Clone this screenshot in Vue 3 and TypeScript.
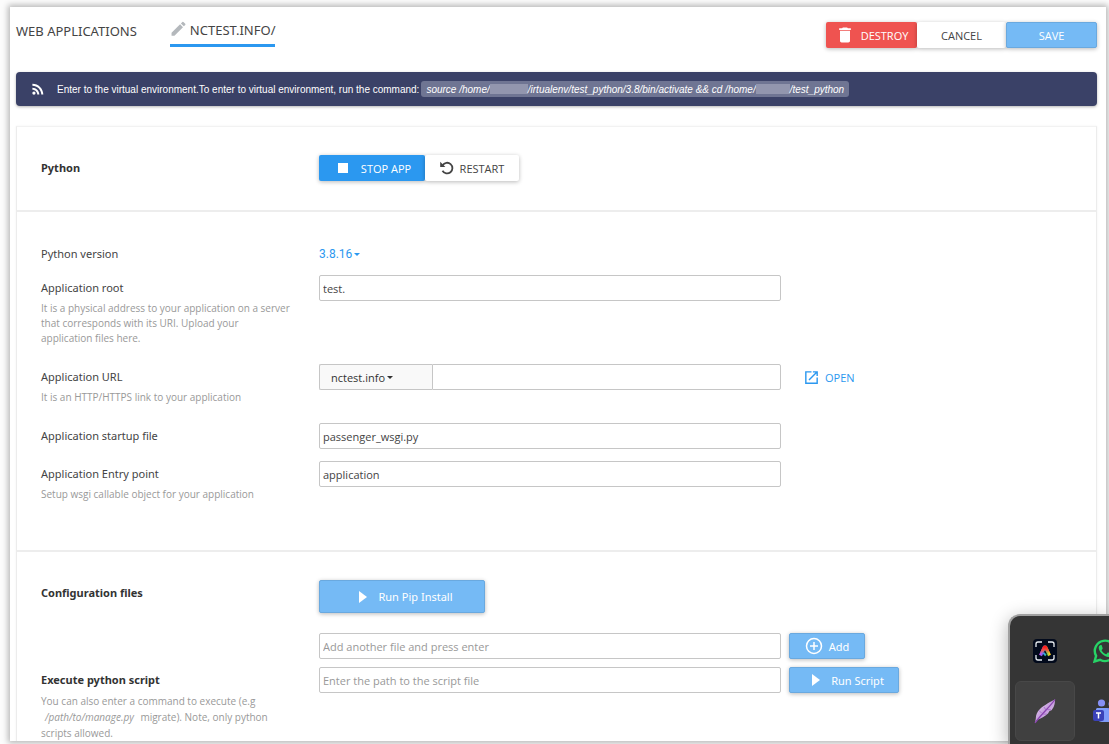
<script setup lang="ts">
import { ref } from 'vue'

const pythonVersion = ref('3.8.16')
const appRoot = ref('test.')
const domain = ref('nctest.info')
const appPath = ref('')
const startupFile = ref('passenger_wsgi.py')
const entryPoint = ref('application')
const extraFile = ref('')
const scriptPath = ref('')
</script>

<template>
  <div class="page">
    <main class="window">
      <header class="top">
        <nav class="tabs">
          <a class="tab" href="#">WEB APPLICATIONS</a>
          <a class="tab active" href="#">
            <svg width="17" height="17" viewBox="1 2 22 22" fill="#b4b8bc"><path d="M3 17.25V21h3.75L17.81 9.94l-3.75-3.75L3 17.25zM20.71 7.04a1 1 0 0 0 0-1.41l-2.34-2.34a1 1 0 0 0-1.41 0l-1.83 1.83 3.75 3.75 1.83-1.83z" /></svg>
            <span>NCTEST.INFO/</span>
          </a>
        </nav>
        <div class="group">
          <button class="btn red" type="button">
            <svg width="20" height="20" viewBox="0 0 24 24" fill="#fff"><path d="M6 19c0 1.1.9 2 2 2h8c1.1 0 2-.9 2-2V7H6v12zM19 4h-3.500l-1-1h-5l-1 1H5v2h14V4z" /></svg>
            <span>DESTROY</span>
          </button>
          <button class="btn white cancel" type="button">CANCEL</button>
          <button class="btn light save" type="button">SAVE</button>
        </div>
      </header>

      <div class="banner">
        <svg width="14" height="14" viewBox="2 2 20 20" fill="#fff"><circle cx="6.2" cy="17.800" r="2.300" /><path d="M4 4.400v2.900c7 0 12.700 5.700 12.700 12.700h2.900C19.600 11.400 12.600 4.400 4 4.400zm0 5.700V13c3.900 0 7 3.100 7 7h2.900c0-5.500-4.400-9.900-9.900-9.900z" /></svg>
        <span>Enter to the virtual environment.To enter to virtual environment, run the command:</span>
        <code>source /home/<i class="mask wide"></i>/irtualenv/test_python/3.8/bin/activate &amp;&amp; cd /home/<i class="mask"></i>/test_python</code>
      </div>

      <form class="card" @submit.prevent>
        <section class="section state">
          <div class="row">
            <h2>Python</h2>
            <div class="group">
              <button class="btn blue" type="button">
                <svg width="20" height="20" viewBox="0 0 24 24" fill="#fff"><path d="M6 6h12v12H6z" /></svg>
                <span>STOP APP</span>
              </button>
              <button class="btn white restart" type="button">
                <svg width="14" height="14" viewBox="0 0 14 14" fill="none" stroke="#444" stroke-width="1.800"><path d="M2.600 4.300A5.300 5.300 0 1 1 2.500 9.700" /><path d="M.2.700v5.200h5.200z" fill="#444" stroke="none" /></svg>
                <span>RESTART</span>
              </button>
            </div>
          </div>
        </section>

        <section class="section settings">
          <div class="row">
            <label for="version">Python version</label>
            <div class="dropdown link">
              <select id="version" v-model="pythonVersion"><option>3.8.16</option></select>
            </div>
          </div>
          <div class="row gap-s">
            <div>
              <label for="root">Application root</label>
              <p>It is a physical address to your application on a server<br />that corresponds with its URI. Upload your<br />application files here.</p>
            </div>
            <input id="root" v-model="appRoot" type="text" />
          </div>
          <div class="row gap-l">
            <div>
              <label for="url">Application URL</label>
              <p>It is an HTTP/HTTPS link to your application</p>
            </div>
            <div class="url">
              <div class="dropdown addon">
                <select v-model="domain" aria-label="Domain"><option>nctest.info</option></select>
              </div>
              <input id="url" v-model="appPath" type="text" />
            </div>
            <a class="open" href="#">
              <svg width="17" height="17" viewBox="0 0 24 24" fill="#2b98f0"><path d="M19 19H5V5h7V3H3v18h18v-9h-2v7zM14 3v2h3.590l-9.830 9.830 1.410 1.410L19 6.410V10h2V3h-7z" /></svg>
              <span>OPEN</span>
            </a>
          </div>
          <div class="row gap-l">
            <label for="startup">Application startup file</label>
            <input id="startup" v-model="startupFile" type="text" />
          </div>
          <div class="row gap-m">
            <div>
              <label for="entry">Application Entry point</label>
              <p>Setup wsgi callable object for your application</p>
            </div>
            <input id="entry" v-model="entryPoint" type="text" />
          </div>
        </section>

        <section class="section files">
          <div class="row">
            <h2>Configuration files</h2>
            <div>
              <button class="btn light pip" type="button">
                <svg width="8" height="12" viewBox="0 0 8 12" fill="#fff"><path d="M0 0l8 6-8 6z" /></svg>
                <span>Run Pip Install</span>
              </button>
            </div>
          </div>
          <div class="row gap-xl">
            <span></span>
            <input v-model="extraFile" type="text" aria-label="Configuration file" placeholder="Add another file and press enter" />
            <button class="btn light add" type="button">
              <svg width="18" height="18" viewBox="0 0 18 18" fill="none" stroke="#fff" stroke-width="1.500"><circle cx="9" cy="9" r="7.500" /><path d="M9 5v8M5 9h8" /></svg>
              <span>Add</span>
            </button>
          </div>
          <div class="row gap-s">
            <div>
              <label class="strong" for="script">Execute python script</label>
              <p class="loose">You can also enter a command to execute (e.g<br /><em>/path/to/manage.py</em> migrate). Note, only python<br />scripts allowed.</p>
            </div>
            <input id="script" v-model="scriptPath" type="text" placeholder="Enter the path to the script file" />
            <button class="btn light run" type="button">
              <svg width="8" height="12" viewBox="0 0 8 12" fill="#fff"><path d="M0 0l8 6-8 6z" /></svg>
              <span>Run Script</span>
            </button>
          </div>
        </section>
      </form>
    </main>

    <aside class="tray">
      <div class="cell">
        <svg width="24" height="24" viewBox="0 0 24 24">
          <defs>
            <linearGradient id="rainbow" x1="0" y1="1" x2="1" y2="1">
              <stop offset="0" stop-color="#c04cf0" /><stop offset=".4" stop-color="#3a8dff" /><stop offset=".6" stop-color="#2fd07a" /><stop offset="1" stop-color="#ffd21f" />
            </linearGradient>
            <linearGradient id="flame" x1="0" y1="0" x2="0" y2="1">
              <stop offset="0" stop-color="#ff1a1a" /><stop offset=".4" stop-color="#ff4a3a" stop-opacity=".85" /><stop offset=".8" stop-color="#ff7a20" stop-opacity="0" />
            </linearGradient>
          </defs>
          <rect width="24" height="24" rx="4" fill="#020a1c" />
          <path d="M3 8V5a2 2 0 0 1 2-2h4M15 3h4a2 2 0 0 1 2 2v3M21 16v3a2 2 0 0 1-2 2h-4M9 21H5a2 2 0 0 1-2-2v-3" fill="none" stroke="#e8edf2" stroke-width="1.300" />
          <path d="M7.500 16.500L11.500 8h1l4 8.500M11 16l1.500-1.500" fill="none" stroke="url(#rainbow)" stroke-width="3.200" stroke-linejoin="round" />
          <path d="M7.500 16.500L11.500 8h1l4 8.500" fill="none" stroke="url(#flame)" stroke-width="3.200" stroke-linejoin="round" />
        </svg>
      </div>
      <div class="cell">
        <svg width="24" height="24" viewBox="0 0 24 24">
          <path d="M1.500 22.500l1.600-5.700a10.200 10.200 0 1 1 4 4z" fill="none" stroke="#27d366" stroke-width="2.400" />
          <path d="M8.800 6.600c-.3-.7-.6-.6-1-.6-.8 0-2.100.9-2.100 2.800 0 2.200 1.600 4.200 2.300 5 1.900 2.200 4.300 4 7 4.300 1.800 0 3.200-1.200 3.200-2.900 0-.4-.3-.5-2.700-1.700-.5-.2-.7-.1-1 .3l-.9 1.200c-.3.300-.6.200-1 0-1.500-.7-2.900-1.700-3.900-3.500-.2-.4 0-.6.200-.8.600-.7 1-1.200.7-1.800z" fill="#27d366" />
        </svg>
      </div>
      <div class="cell selected">
        <svg width="24" height="26" viewBox="0 0 24 26">
          <defs>
            <linearGradient id="plume" x1="0" y1="0" x2="1" y2="1">
              <stop offset="0" stop-color="#f0e2f7" /><stop offset=".5" stop-color="#c49bdc" /><stop offset="1" stop-color="#ecd8f5" />
            </linearGradient>
          </defs>
          <path d="M22 1.500c-4 2-11 5.500-15.500 10C4 14 2.800 17 2.800 20.500L2 25l2-3c4-1.500 8-3.500 11-6.500l1.500-2.500 2-.8c2-2.200 3.500-5.200 3.500-10.700z" fill="url(#plume)" />
          <path d="M22 1.500C16 10 9 15 2 25" fill="none" stroke="#8a44b0" stroke-width="1.300" />
          <path d="M6 12.500L8.500 15M11 9l2 3M10 16l4 .2M14 11.500l4 .3" stroke="#9a5cc0" stroke-width=".7" />
        </svg>
      </div>
      <div class="cell">
        <svg width="24" height="24" viewBox="0 0 24 24">
          <circle cx="8.500" cy="4" r="3.600" fill="#8790f5" />
          <circle cx="18.500" cy="5" r="3" fill="#7079ea" />
          <path d="M14 9h8a2 2 0 0 1 2 2v6a6 6 0 0 1-8 5z" fill="#6a6fe8" />
          <path d="M4 9h10a2 2 0 0 1 2 2v12H9a6 6 0 0 1-6-6v-7z" fill="#7f9cfa" />
          <rect y="11" width="11" height="11" rx="2" fill="#3a41b8" />
          <path d="M3 14h5M5.500 14v5.500" stroke="#fff" stroke-width="1.500" />
        </svg>
      </div>
    </aside>
  </div>
</template>

<style>
body {
  margin: 0;
  background: #fcfcfc;
}
</style>

<style scoped>
* {
  box-sizing: border-box;
}

.page {
  position: relative;
  display: flex;
  height: 100vh;
  padding: 7px 3px 3px 10px;
  overflow: hidden;
  font-family: "Open Sans", "Noto Sans", sans-serif;
  font-size: 11px;
  color: #444;
}

.window {
  flex: 1;
  min-width: 0;
  overflow: hidden;
  padding: 15px 9px 0 6px;
  background: #fff;
  box-shadow: 0 0 6px 2px rgba(0, 0, 0, 0.28);
}

.top {
  display: flex;
  justify-content: space-between;
  align-items: flex-start;
}

.tabs {
  display: flex;
  gap: 33px;
  font-family: "Noto Sans", sans-serif;
}

.tab {
  display: flex;
  align-items: center;
  height: 25px;
  padding-bottom: 7px;
  font-size: 13px;
  line-height: 18px;
  color: #444;
  text-decoration: none;
}

.tab.active {
  gap: 3px;
  border-bottom: 3px solid #2b98f0;
}

.group {
  display: flex;
}

.btn {
  display: flex;
  align-items: center;
  justify-content: center;
  height: 26px;
  padding: 0;
  border: 0;
  border-radius: 2px;
  box-shadow: 0 1px 4px rgba(0, 0, 0, 0.28);
  font-family: inherit;
  font-size: 11px;
  color: #fff;
}

.btn.red {
  gap: 6px;
  width: 91px;
  background: #ef5350;
}

.btn.white {
  background: #fff;
  color: #444;
}

.btn.cancel {
  width: 89px;
}

.btn.blue {
  gap: 8px;
  width: 106px;
  background: #2b98f0;
}

.btn.restart {
  gap: 6px;
  width: 94px;
}

.btn.light {
  border: 1px solid #6aa9df;
  background: #75baf5;
}

.btn.save {
  width: 91px;
}

.btn.pip {
  gap: 11px;
  width: 166px;
  height: 33px;
  padding-left: 8px;
}

.btn.add {
  gap: 6px;
  width: 76px;
}

.btn.run {
  gap: 11px;
  width: 110px;
  padding-left: 8px;
}

.btn.pip,
.btn.add,
.btn.run {
  font-family: "Noto Sans", sans-serif;
}

.banner {
  display: flex;
  align-items: center;
  height: 34px;
  margin-top: 24px;
  padding-left: 15px;
  border-radius: 4px;
  background: #3a4167;
  box-shadow: 0 1px 3px rgba(0, 0, 0, 0.3);
  font-family: "Liberation Sans", Arial, sans-serif;
  font-size: 10px;
  color: #fff;
  white-space: nowrap;
}

.banner svg {
  margin-right: 12px;
}

.banner code {
  display: flex;
  align-items: center;
  height: 16px;
  margin-left: 2px;
  padding: 0 5px;
  border-radius: 3px;
  background: #6f7593;
  font-family: inherit;
  font-style: italic;
}

.mask {
  width: 34px;
  height: 10px;
  background: #9296ae;
}

.mask.wide {
  width: 38px;
}

.card {
  margin-top: 20px;
  border: 1px solid #ececec;
  border-top-color: #f2f2f2;
  box-shadow: 0 0 2px rgba(0, 0, 0, 0.06);
}

.section {
  padding-left: 24px;
}

.section + .section {
  border-top: 2px solid #ededed;
}

.state {
  padding-top: 28px;
  padding-bottom: 29px;
}

.settings {
  padding-top: 29px;
  padding-bottom: 48px;
}

.files {
  padding-top: 28px;
  padding-bottom: 28px;
}

.row {
  display: grid;
  grid-template-columns: 270px minmax(0, 462px) auto;
  column-gap: 8px;
  align-items: start;
  justify-content: start;
}

.gap-s {
  margin-top: 8px;
}

.gap-m {
  margin-top: 12px;
}

.gap-l {
  margin-top: 18px;
}

.gap-xl {
  margin-top: 20px;
}

h2,
label {
  display: block;
  margin: 0;
  font-family: "Noto Sans", sans-serif;
  font-size: 11px;
  font-weight: 400;
  line-height: 26px;
}

h2,
.strong {
  font-weight: 700;
  color: #333;
}

p {
  margin: 0;
  font-size: 10px;
  line-height: 15px;
  color: #999;
}

.loose {
  line-height: 16px;
}

em {
  margin: 0 4px;
}

input {
  width: 100%;
  height: 26px;
  padding: 0 3px;
  border: 1px solid #c6c6c6;
  border-radius: 2px;
  background: #fff;
  font-family: inherit;
  font-size: 11px;
  color: #444;
}

input::placeholder {
  color: #999;
  opacity: 1;
}

.dropdown {
  display: flex;
  align-items: center;
  gap: 1px;
  height: 26px;
}

.dropdown::after {
  content: "";
  border: 3px solid transparent;
  border-bottom: 0;
  border-top-color: currentColor;
}

select {
  padding: 0;
  border: 0;
  background: none;
  appearance: none;
  font-family: inherit;
  font-size: 12px;
  color: inherit;
}

.link {
  font-family: Roboto, sans-serif;
  color: #2b98f0;
}

.url {
  display: flex;
}

.addon {
  flex: none;
  width: 113px;
  padding-left: 11px;
  border: 1px solid #c6c6c6;
  border-right: 0;
  border-radius: 2px 0 0 2px;
  background: #f9f9f9;
  color: #333;
}

.addon select {
  font-size: 11px;
}

.url input {
  flex: 1;
  min-width: 0;
  border-radius: 0 2px 2px 0;
}

.open {
  display: flex;
  align-items: center;
  gap: 5px;
  height: 26px;
  margin-left: 14px;
  color: #2b98f0;
  text-decoration: none;
}

.tray {
  position: absolute;
  right: 0;
  bottom: 0;
  display: grid;
  grid-template-columns: 60px 60px;
  grid-template-rows: 60px 60px;
  width: 101px;
  height: 130px;
  padding: 5px;
  overflow: hidden;
  border-top: 2px solid #a0a0a0;
  border-left: 2px solid #a0a0a0;
  border-radius: 12px 0 0 0;
  background: #353535;
  box-shadow: 0 4px 18px rgba(0, 0, 0, 0.3);
}

.cell {
  display: flex;
  align-items: center;
  justify-content: center;
}

.selected {
  border: 1px solid #484848;
  border-radius: 6px;
  background: #404040;
}
</style>
